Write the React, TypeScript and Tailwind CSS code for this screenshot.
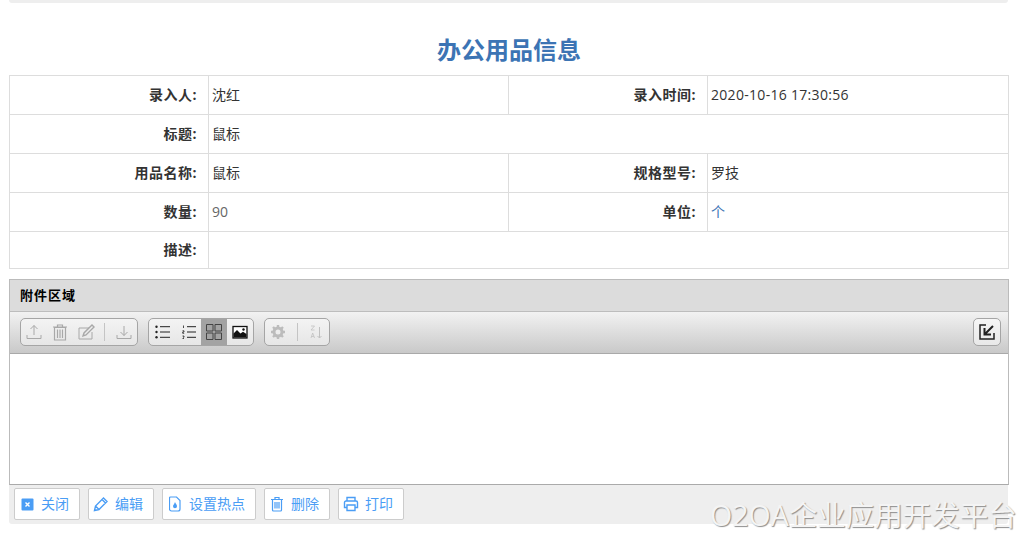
import React from "react";

const FONT = { fontFamily: '"Open Sans","Noto Sans CJK SC",sans-serif' };

const Label = ({ children, colSpan }: { children: React.ReactNode; colSpan?: number }) => (
  <td colSpan={colSpan} className="border border-[#dddddd] pr-[11px] pb-[2px] text-right text-[14px] font-bold tracking-[0.5px] text-[#333333]">
    {children}
  </td>
);
const Val = ({ children, colSpan, cls = "text-[#333333]" }: { children?: React.ReactNode; colSpan?: number; cls?: string }) => (
  <td colSpan={colSpan} className={`border border-[#dddddd] pb-[2px] pl-[3px] text-[14px] ${cls}`}>
    {children}
  </td>
);

const G = ({ c = "#a8a8a8", children, w = 20 }: { c?: string; children: React.ReactNode; w?: number }) => (
  <svg width={w} height="20" viewBox="0 0 20 20" fill="none" stroke={c} strokeWidth="1" className="shrink-0">
    {children}
  </svg>
);

const Sep = ({ cls }: { cls: string }) => <div className={`h-[18px] w-px bg-[#c4c4c4] ${cls}`} />;

const Group = ({ children, cls = "" }: { children: React.ReactNode; cls?: string }) => (
  <div className={`flex h-[28px] items-center overflow-hidden rounded-[5px] border border-[#a5a5a5] bg-gradient-to-b from-[#f3f3f3] to-[#e6e6e6] ${cls}`}>
    {children}
  </div>
);

const Btn = ({ icon, label, cls }: { icon: React.ReactNode; label: string; cls: string }) => (
  <div className={`flex h-[32px] items-center rounded-[2px] border border-[#cccccc] bg-white pl-[2px] text-[14px] text-[#4a9df5] ${cls}`}>
    <span className="flex w-[20px] shrink-0 items-center justify-center">{icon}</span>
    <span className="mb-[2px] ml-[4px]">{label}</span>
  </div>
);

const B = "#4a9df5";

export default function App() {
  return (
    <div className="relative h-[539px] w-[1027px] overflow-hidden bg-white" style={FONT}>
      <div className="mx-[9px] h-[3px] w-[999px] rounded-b-[3px] bg-[#eeeeee]" />
      <h1 className="mt-[31px] h-[41px] w-[1018px] text-center text-[24px] leading-[32px] font-bold text-[#3c74b4]">办公用品信息</h1>
      <table className="ml-[9px] w-[999px] table-fixed border-collapse">
        <colgroup>
          <col className="w-[199px]" />
          <col className="w-[300px]" />
          <col className="w-[199px]" />
          <col className="w-[301px]" />
        </colgroup>
        <tbody>
          <tr className="h-[39px]">
            <Label>录入人:</Label>
            <Val>沈红</Val>
            <Label>录入时间:</Label>
            <Val cls="text-[#333333] tracking-[0.3px]">2020-10-16 17:30:56</Val>
          </tr>
          <tr className="h-[39px]">
            <Label>标题:</Label>
            <Val colSpan={3}>鼠标</Val>
          </tr>
          <tr className="h-[39px]">
            <Label>用品名称:</Label>
            <Val>鼠标</Val>
            <Label>规格型号:</Label>
            <Val>罗技</Val>
          </tr>
          <tr className="h-[39px]">
            <Label>数量:</Label>
            <Val cls="text-[#666666]">90</Val>
            <Label>单位:</Label>
            <Val cls="text-[#3c74b4]">个</Val>
          </tr>
          <tr className="h-[37px]">
            <Label>描述:</Label>
            <Val colSpan={3} />
          </tr>
        </tbody>
      </table>

      <div className="mt-[10px] ml-[9px] w-[1000px] border border-[#bbbbbb] border-b-[#aaaaaa]">
        <div className="flex h-[32px] items-center border-b border-[#bdbdbd] bg-[#dcdcdc] pt-[1px] pl-[10px] text-[13px] font-bold text-black">
          <span className="tracking-[1px]">附件区域</span>
        </div>
        <div className="flex h-[42px] items-center border-b border-[#a9a9a9] bg-gradient-to-b from-[#f2f2f2] to-[#c9c9c9] pr-[7px] pb-[1px] pl-[10px]">
          <Group cls="w-[118px] pl-[3px]">
            <span className="flex gap-[6px]">
              <G>
                <path d="M10 13V3.500M6.500 7l3.500-3.500 3.500 3.500M3 13v3.500h14V13" />
              </G>
              <G>
                <path d="M3 5h14M7.500 5V3h5v2M4.500 5.500h11V18h-11zM7.500 7.500V16M10 7.500V16M12.500 7.500V16" strokeWidth="1.200" />
              </G>
              <G>
                <path d="M13 6H3v11h13v-7" />
                <path d="M7 14l1-3 8-8 2 2-8 8z" strokeWidth="1.400" />
              </G>
            </span>
            <Sep cls="mr-[9px] ml-[8px]" />
            <G>
              <path d="M10 4v9.500M6.500 10l3.500 3.500 3.500-3.500M3 13v3.500h14V13" />
            </G>
          </Group>
          <Group cls="ml-[10px] w-[106px] pl-[4px]">
            <span className="flex gap-[6px]">
              <G c="#222222">
                <path d="M7 4.700h10M7 10h10M7 15.300h10" />
                <circle cx="3.500" cy="4.700" r="1.200" fill="#222222" stroke="none" />
                <circle cx="3.500" cy="10" r="1.200" fill="#222222" stroke="none" />
                <circle cx="3.500" cy="15.300" r="1.200" fill="#222222" stroke="none" />
              </G>
              <G c="#222222">
                <path d="M8 4.700h9M8 10h9M8 15.300h9" />
                <path d="M4.500 3.500v2.500M3.500 8.800h1.500v1.200H3.700v1.300h1.500M3.500 14h1.500v1.200H4M3.500 16.500h1.500" strokeWidth="0.800" />
              </G>
            </span>
            <span className="ml-[2px] flex h-full w-[26px] items-center justify-center bg-[#a3a3a3]">
              <G c="#444444">
                <path d="M2.500 2.500h6.500v6.500h-6.500zM11 2.500h6.500v6.500h-6.500zM2.500 11h6.500v6.500h-6.500zM11 11h6.500v6.500h-6.500z" />
              </G>
            </span>
            <span className="ml-[3px]">
              <G c="#111111">
                <rect x="3" y="4.500" width="14" height="11.500" fill="#ffffff" strokeWidth="1.300" />
                <path d="M3.500 15.500V11.500l3.500-3.500 3.500 3.500 2.500-1.800 3.500 2.300v3.500z" fill="#111111" stroke="none" />
                <circle cx="13.500" cy="7.500" r="1.200" fill="#111111" stroke="none" />
              </G>
            </span>
          </Group>
          <Group cls="ml-[10px] w-[66px] pl-[3px]">
            <G c="#bcbcbc">
              <circle cx="10" cy="10" r="4" fill="none" strokeWidth="3" />
              <path d="M10 3v3M10 14v3M3 10h3M14 10h3M5 5l2 2M13 13l2 2M15 5l-2 2M7 13l-2 2" strokeWidth="2.400" />
            </G>
            <Sep cls="mr-[8px] ml-[9px]" />
            <G c="#c0c0c0">
              <path d="M13.500 5v11M11.500 14l2 2 2-2" />
              <path d="M5 4h3.500l-3.500 4h3.500M5 16l1.700-5 1.800 5M5.700 14.500h2.100" strokeWidth="0.800" />
            </G>
          </Group>
          <div className="ml-auto flex h-[28px] w-[28px] items-center justify-center rounded-[5px] border border-[#a5a5a5] bg-gradient-to-b from-[#f6f6f6] to-[#e8e8e8]">
            <G c="#222222">
              <path d="M9 3H3v14h14v-6" strokeWidth="1.500" />
              <path d="M16 4L8.500 11.500M7.500 6v6.500h6.500" strokeWidth="2" />
            </G>
          </div>
        </div>
        <div className="h-[130px] bg-white" />
      </div>

      <div className="ml-[9px] flex h-[39px] w-[999px] items-start gap-[8px] rounded-b-[3px] bg-[#eeeeee] pt-[3px] pl-[5px]">
        <Btn
          cls="w-[66px]"
          label="关闭"
          icon={
            <svg width="13" height="13" viewBox="0 0 13 13">
              <rect width="12" height="12" x="0.500" y="0.500" rx="1" fill={B} />
              <path d="M4.500 4.500l4 4M8.500 4.500l-4 4" stroke="#ffffff" strokeWidth="1.400" />
            </svg>
          }
        />
        <Btn
          cls="w-[66px]"
          label="编辑"
          icon={
            <svg width="16" height="16" viewBox="0 0 16 16" fill="none" stroke={B} strokeWidth="1.400">
              <path d="M1.500 14.500l1-4.500 8-8 3.500 3.500-8 8zM2.500 10l3.500 3.500M9 3.500l3.500 3.500" />
            </svg>
          }
        />
        <Btn
          cls="w-[94px]"
          label="设置热点"
          icon={
            <svg width="12" height="16" viewBox="0 0 12 16" fill="none" stroke={B} strokeWidth="1.200">
              <path d="M1.500 1h6l3.500 3.500V13a2 2 0 0 1-2 2H2.500a2 2 0 0 1-2-2V2a1 1 0 0 1 1-1z" />
              <path d="M6 6c.3 1.500 2 2.300 2 4.200A2 2 0 0 1 4 10.200C4 9 5.500 8 6 6z" fill={B} stroke="none" />
            </svg>
          }
        />
        <Btn
          cls="w-[66px]"
          label="删除"
          icon={
            <svg width="14" height="16" viewBox="0 0 14 16" fill="none" stroke={B} strokeWidth="1.200">
              <path d="M1 3.500h12M5 3.500V1.500h4v2M2.500 3.500V14a1 1 0 0 0 1 1h7a1 1 0 0 0 1-1V3.500M5 6v6.500M7 6v6.500M9 6v6.500" />
            </svg>
          }
        />
        <Btn
          cls="w-[66px]"
          label="打印"
          icon={
            <svg width="16" height="16" viewBox="0 0 16 16" fill="none" stroke={B} strokeWidth="1.400">
              <path d="M4 5V1.500h8V5M4 11.500H1.500V6.500A1.500 1.500 0 0 1 3 5h10a1.500 1.500 0 0 1 1.500 1.500v5H12M4 9h8v5.500H4z" />
            </svg>
          }
        />
      </div>

      <div
        className="absolute top-[497px] left-[710px] text-[28.500px] leading-[36px] whitespace-nowrap text-[#f4f4f4]"
        style={{ textShadow: "1px 1px 1px #8f8f8f" }}
      >
        O2OA企业应用开发平台
      </div>
    </div>
  );
}
